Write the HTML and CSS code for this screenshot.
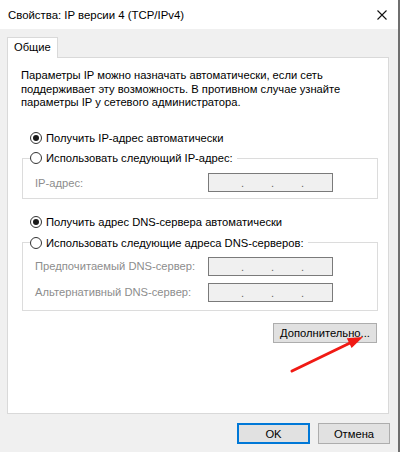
FILE: index.html
```html
<!DOCTYPE html>
<html lang="ru">
<head>
<meta charset="utf-8">
<title>Свойства: IP версии 4 (TCP/IPv4)</title>
<link rel="stylesheet" href="styles.css">
</head>
<body>
<div class="window">
  <div class="titlebar">
    <span class="title">Свойства: IP версии 4 (TCP/IPv4)</span>
    <svg class="close" width="10" height="10" viewBox="0 0 10 10"><path d="M0.5 0.5 L9.5 9.5 M9.5 0.5 L0.5 9.5" stroke="#111" stroke-width="1.1" fill="none"/></svg>
  </div>
  <div class="main">
    <div class="tabs"><div class="tab">Общие</div></div>
    <div class="panel">
      <p class="intro">Параметры IP можно назначать автоматически, если сеть поддерживает эту возможность. В противном случае узнайте параметры IP у сетевого администратора.</p>
      <div class="radio-row auto"><span class="radio checked"></span><span>Получить IP-адрес автоматически</span></div>
      <fieldset class="group">
        <legend><div class="radio-row"><span class="radio"></span><span>Использовать следующий IP-адрес:</span></div></legend>
        <div class="field first"><span class="label">IP-адрес:</span><div class="ip"><span class="dot">.</span><span class="dot">.</span><span class="dot">.</span></div></div>
      </fieldset>
      <div class="radio-row auto2"><span class="radio checked"></span><span>Получить адрес DNS-сервера автоматически</span></div>
      <fieldset class="group">
        <legend><div class="radio-row"><span class="radio"></span><span>Использовать следующие адреса DNS-серверов:</span></div></legend>
        <div class="field first-dns"><span class="label">Предпочитаемый DNS-сервер:</span><div class="ip"><span class="dot">.</span><span class="dot">.</span><span class="dot">.</span></div></div>
        <div class="field second-dns"><span class="label">Альтернативный DNS-сервер:</span><div class="ip"><span class="dot">.</span><span class="dot">.</span><span class="dot">.</span></div></div>
      </fieldset>
      <div class="adv"><button class="btn adv-btn">Дополнительно...</button></div>
    </div>
  </div>
  <div class="footer">
    <button class="btn ok">OK</button>
    <button class="btn cancel">Отмена</button>
  </div>
  <svg class="arrow" width="400" height="452" viewBox="0 0 400 452">
    <line x1="292" y1="371" x2="351" y2="342.5" stroke="#f01a14" stroke-width="3" stroke-linecap="round"/>
    <polygon points="363,337 351.6,348 346.8,338.2" fill="#f01a14"/>
  </svg>
</div>
</body>
</html>
```
FILE: styles.css
```css
* { box-sizing: border-box; }
html, body { margin: 0; padding: 0; }
body {
  width: 400px;
  height: 452px;
  overflow: hidden;
  background: #f0f0f0;
  font-family: "Liberation Sans", Arial, sans-serif;
  font-size: 11.2px;
  color: #000;
}
.window {
  position: relative;
  width: 400px;
  height: 452px;
  display: flex;
  flex-direction: column;
  background: #f0f0f0;
  border-right: 2px solid #6f6f6f;
}
.titlebar {
  height: 29px;
  flex: none;
  background: #fff;
  display: flex;
  align-items: center;
  justify-content: space-between;
  padding: 0 11px 0 8px;
}
.title { font-size: 11.4px; }
.close { display: block; }
.main {
  flex: 1;
  display: flex;
  flex-direction: column;
  padding: 8px 9px 0 7px;
  min-height: 0;
}
.tabs { display: flex; }
.tab {
  position: relative;
  z-index: 1;
  height: 21px;
  margin-bottom: -1px;
  padding: 0 6px;
  line-height: 19px;
  background: #fff;
  border: 1px solid #d9d9d9;
  border-bottom: none;
}
.panel {
  flex: 1;
  background: #fff;
  border: 1px solid #d9d9d9;
  padding: 11px 10px 0 13px;
}
.intro {
  margin: 0;
  line-height: 13.5px;
}
.radio-row {
  display: flex;
  align-items: center;
  height: 16px;
  gap: 4px;
  white-space: nowrap;
}
.radio {
  width: 12px;
  height: 12px;
  border: 1px solid #333;
  border-radius: 50%;
  background: #fff;
  display: flex;
  align-items: center;
  justify-content: center;
  flex: none;
}
.radio.checked::after {
  content: "";
  width: 6px;
  height: 6px;
  border-radius: 50%;
  background: #1a1a1a;
}
.auto { margin: 20px 0 0 9px; }
.auto2 { margin: 15px 0 0 9px; }
.group {
  margin: 4.5px 0 0 1px;
  border: 1px solid #dcdcdc;
  padding: 0 43px 6px 12px;
  min-width: 0;
}
.group legend {
  padding: 0 4px 0 0;
  margin-left: -5px;
}
.group:last-of-type { padding-bottom: 8px; }
.field {
  display: grid;
  grid-template-columns: 173px 125px;
  align-items: center;
}
.field.first { margin-top: 7px; }
.field.first-dns { margin-top: 6px; }
.field.second-dns { margin-top: 7px; }
.label { color: #8d8d8d; }
.ip {
  height: 19px;
  border: 1px solid #7a7a7a;
  background: #f0f0f0;
  display: flex;
  padding-left: 32px;
  line-height: 19px;
  color: #666;
  font-size: 11px;
}
.dot { width: 30px; }
.adv {
  display: flex;
  justify-content: flex-end;
  margin-top: 12px;
  padding-right: 1px;
}
.btn {
  font-family: inherit;
  font-size: 11.2px;
  color: #000;
  background: #e1e1e1;
  border: 1px solid #adadad;
  padding: 0;
  margin: 0;
}
.adv-btn { width: 104px; height: 20px; }
.footer {
  height: 38px;
  flex: none;
  display: flex;
  justify-content: flex-end;
  gap: 8px;
  padding: 9px 8px 8px 0;
}
.ok { width: 73px; height: 21px; border: 2px solid #0078d7; }
.cancel { width: 72px; height: 21px; }
.arrow {
  position: absolute;
  left: 0;
  top: 0;
  pointer-events: none;
}
```
